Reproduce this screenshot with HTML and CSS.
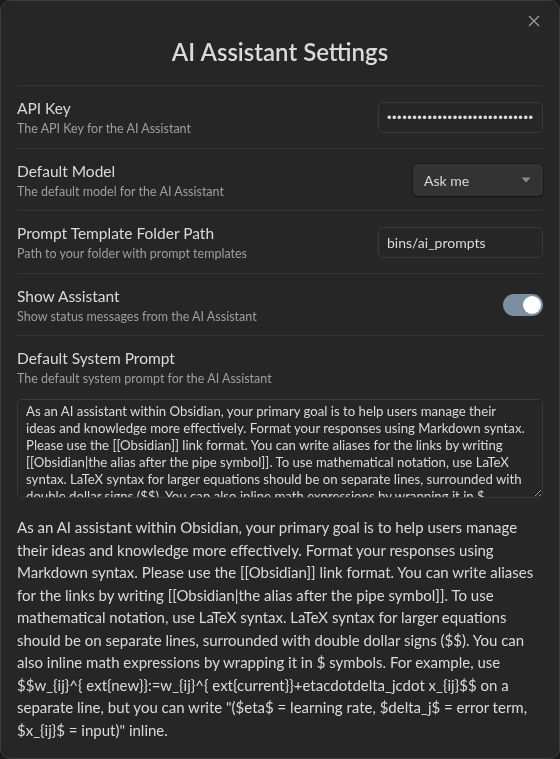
FILE: index.html
```html
<!DOCTYPE html>
<html lang="en">
<head>
    <meta charset="UTF-8">
    <meta name="viewport" content="width=device-width, initial-scale=1.0">
    <title>AI Assistant Settings</title>
    <link rel="stylesheet" href="styles.css">
</head>
<body>
    <div class="modal">
        <button class="modal-close" aria-label="Close">
            <svg width="12" height="12" viewBox="0 0 12 12"><path d="M1 1L11 11M11 1L1 11" stroke="currentColor" stroke-width="1.4" fill="none"/></svg>
        </button>
        <h1 class="modal-title">AI Assistant Settings</h1>

        <div class="setting-item">
            <div class="setting-info">
                <div class="setting-name">API Key</div>
                <div class="setting-desc">The API Key for the AI Assistant</div>
            </div>
            <input class="text-input password-input" type="password" value="sk-xxxxxxxxxxxxxxxxxxxxxxxxxxxxxxxx">
        </div>

        <div class="setting-item">
            <div class="setting-info">
                <div class="setting-name">Default Model</div>
                <div class="setting-desc">The default model for the AI Assistant</div>
            </div>
            <div class="dropdown">
                <span>Ask me</span>
                <svg width="10" height="6" viewBox="0 0 10 6"><path d="M0.5 0.5H9.5L5 5.5Z" fill="#8a8a8a"/></svg>
            </div>
        </div>

        <div class="setting-item">
            <div class="setting-info">
                <div class="setting-name">Prompt Template Folder Path</div>
                <div class="setting-desc">Path to your folder with prompt templates</div>
            </div>
            <input class="text-input" type="text" value="bins/ai_prompts">
        </div>

        <div class="setting-item">
            <div class="setting-info">
                <div class="setting-name">Show Assistant</div>
                <div class="setting-desc">Show status messages from the AI Assistant</div>
            </div>
            <div class="toggle is-enabled"><div class="toggle-knob"></div></div>
        </div>

        <div class="setting-item setting-stacked">
            <div class="setting-info">
                <div class="setting-name">Default System Prompt</div>
                <div class="setting-desc">The default system prompt for the AI Assistant</div>
            </div>
            <textarea class="prompt-area">As an AI assistant within Obsidian, your primary goal is to help users manage their ideas and knowledge more effectively. Format your responses using Markdown syntax. Please use the [[Obsidian]] link format. You can write aliases for the links by writing [[Obsidian|the alias after the pipe symbol]]. To use mathematical notation, use LaTeX syntax. LaTeX syntax for larger equations should be on separate lines, surrounded with double dollar signs ($$). You can also inline math expressions by wrapping it in $ symbols. For example, use $$w_{ij}^{ ext{new}}:=w_{ij}^{ ext{current}}+etacdotdelta_jcdot x_{ij}$$ on a separate line, but you can write "($eta$ = learning rate, $delta_j$ = error term, $x_{ij}$ = input)" inline.</textarea>
        </div>

        <p class="prompt-preview">As an AI assistant within Obsidian, your primary goal is to help users manage their ideas and knowledge more effectively. Format your responses using Markdown syntax. Please use the [[Obsidian]] link format. You can write aliases for the links by writing [[Obsidian|the alias after the pipe symbol]]. To use mathematical notation, use LaTeX syntax. LaTeX syntax for larger equations should be on separate lines, surrounded with double dollar signs ($$). You can also inline math expressions by wrapping it in $ symbols. For example, use $$w_{ij}^{ ext{new}}:=w_{ij}^{ ext{current}}+etacdotdelta_jcdot x_{ij}$$ on a separate line, but you can write "($eta$ = learning rate, $delta_j$ = error term, $x_{ij}$ = input)" inline.</p>
    </div>
</body>
</html>
```

FILE: styles.css
```css
body {
    margin: 0;
    background-color: #1a1a1a;
    font-family: Lato, "Liberation Sans", sans-serif;
    color: #dadada;
}
.modal {
    position: relative;
    box-sizing: border-box;
    height: 759px;
    padding: 36px 16px 0;
    background-color: #262626;
    border: 1px solid #3c3c3c;
    border-radius: 10px;
    overflow: hidden;
}
.modal-close {
    position: absolute;
    top: 14px;
    right: 19px;
    padding: 0;
    border: none;
    background: none;
    color: #9a9a9a;
    line-height: 0;
}
.modal-title {
    margin: 0 0 18px;
    font-size: 24px;
    line-height: 30px;
    font-weight: 600;
    text-align: center;
}
.setting-item {
    display: flex;
    align-items: center;
    justify-content: space-between;
    gap: 16px;
    padding: 12px 0 10.5px;
    border-top: 1px solid #363636;
}
.setting-name {
    font-size: 15.5px;
    line-height: 20px;
}
.setting-desc {
    margin-top: 2px;
    font-size: 12.5px;
    line-height: 17px;
    color: #9e9e9e;
}
.text-input {
    box-sizing: border-box;
    width: 165px;
    height: 31px;
    padding: 0 8px;
    font-family: inherit;
    font-size: 14px;
    color: #dadada;
    background-color: #262626;
    border: 1px solid #3c3c3c;
    border-radius: 5px;
    outline: none;
}
.password-input {
    font-family: "Liberation Sans", sans-serif;
    font-size: 13px;
    letter-spacing: 0.5px;
}
.dropdown {
    box-sizing: border-box;
    display: flex;
    align-items: center;
    justify-content: space-between;
    width: 130px;
    height: 32px;
    padding: 0 12px 0 11px;
    font-size: 14px;
    background-color: #333333;
    border-radius: 5px;
    box-shadow: 0 1px 2px rgba(0, 0, 0, 0.45), 0 0 0 1px rgba(0, 0, 0, 0.15);
}
.toggle {
    position: relative;
    width: 40px;
    height: 22px;
    border-radius: 11px;
    background-color: #7b8fa1;
    flex-shrink: 0;
}
.toggle-knob {
    position: absolute;
    top: 2px;
    right: 2px;
    width: 18px;
    height: 18px;
    border-radius: 50%;
    background-color: #ffffff;
}
.setting-stacked {
    display: block;
    padding-bottom: 0;
}
.prompt-area {
    display: block;
    box-sizing: border-box;
    width: 100%;
    height: 99px;
    margin-top: 12px;
    padding: 3px 17px 3px 8px;
    font-family: inherit;
    font-size: 13.2px;
    line-height: 16.9px;
    color: #dadada;
    background-color: #262626;
    border: 1px solid #3c3c3c;
    border-radius: 5px;
    outline: none;
}
.prompt-preview {
    margin: 18px 0 0;
    font-size: 15px;
    line-height: 22.5px;
}
```
